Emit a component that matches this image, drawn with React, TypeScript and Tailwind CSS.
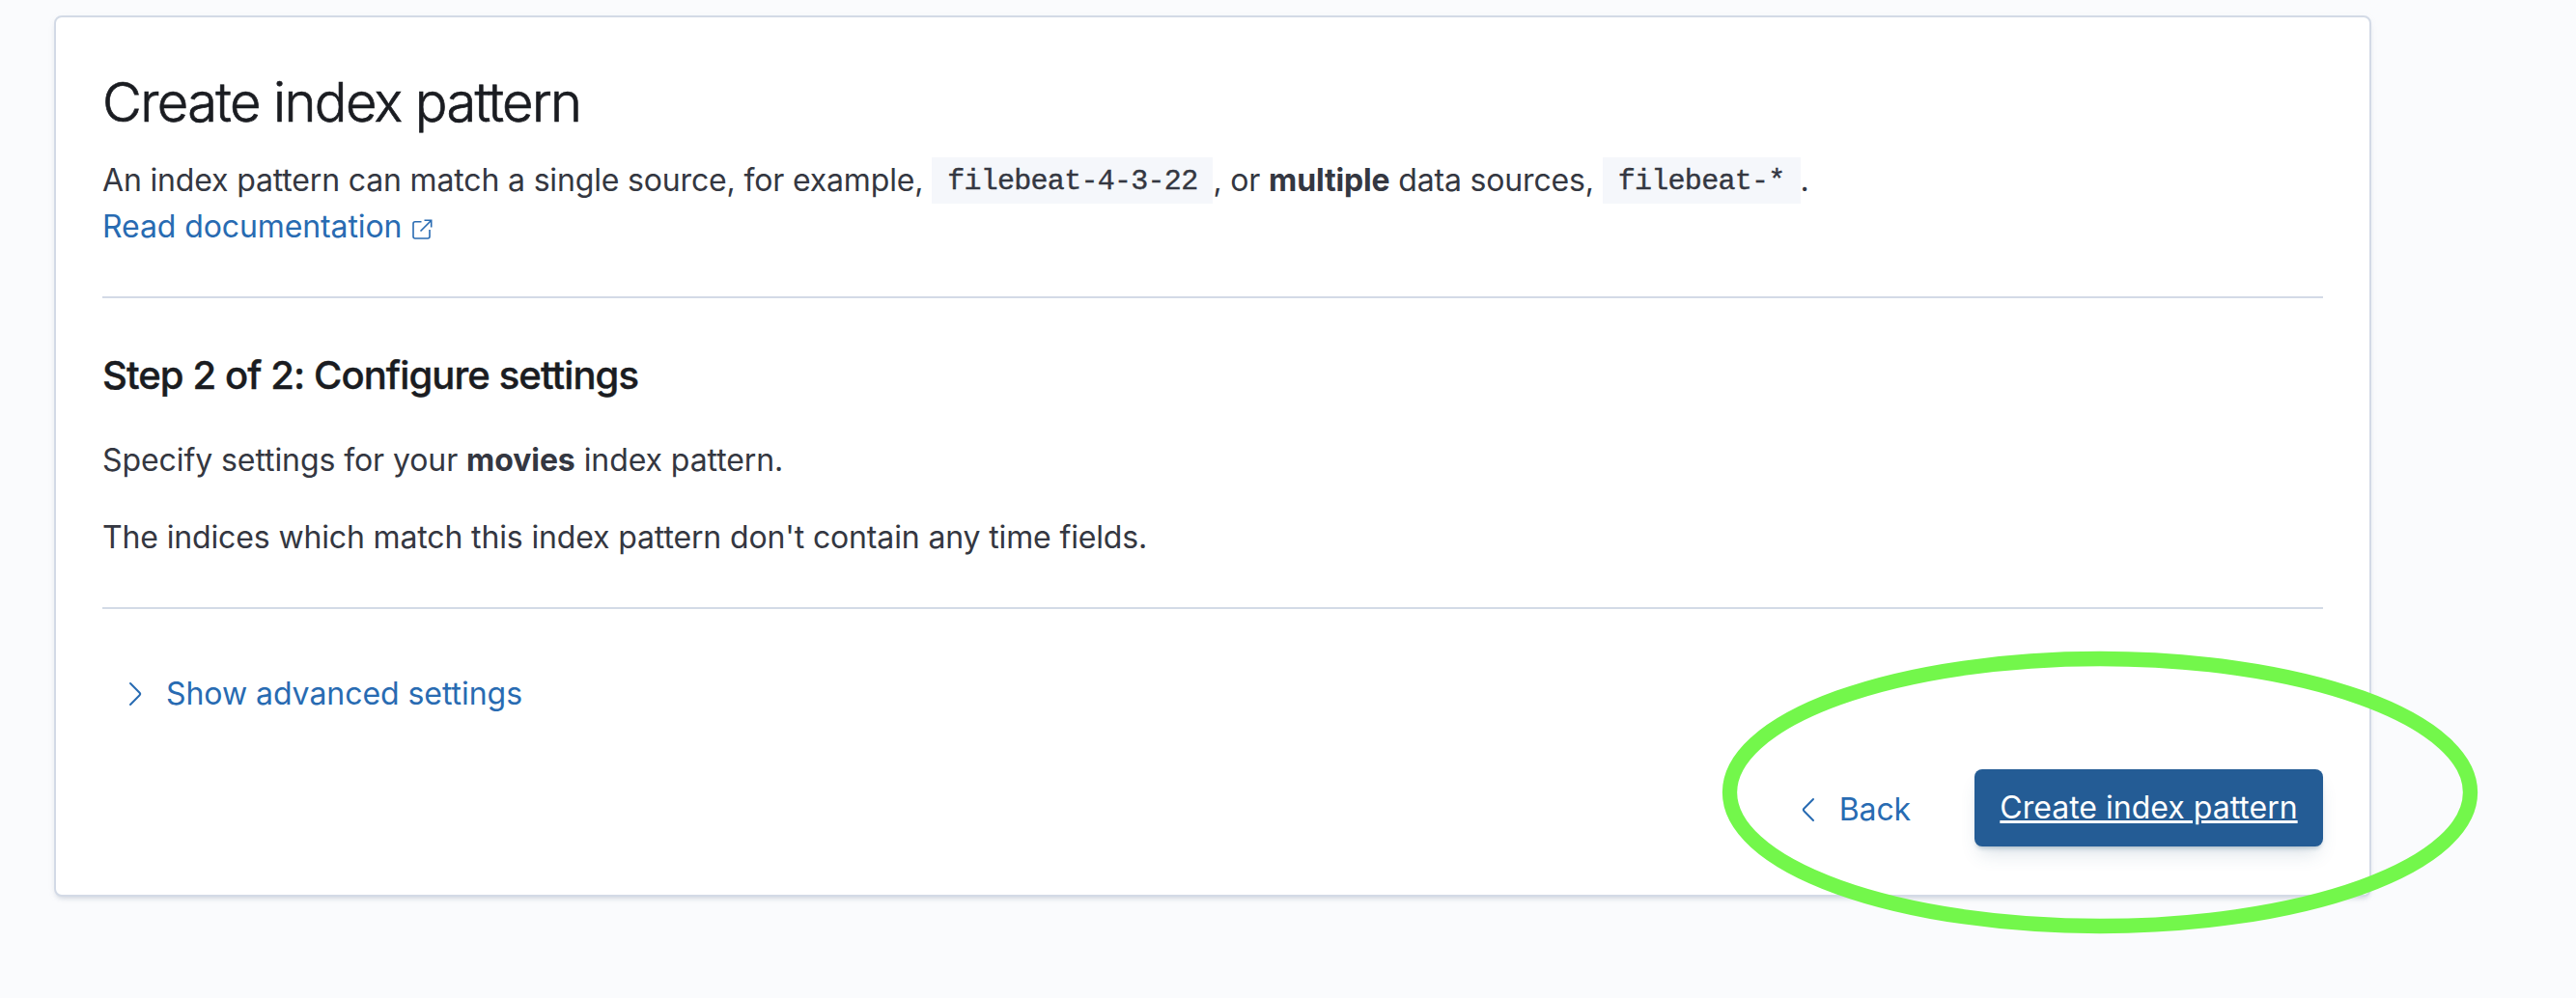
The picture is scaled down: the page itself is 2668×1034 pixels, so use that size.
import React from "react";

function Code({ children }: { children: React.ReactNode }) {
  return (
    <code className="inline-block h-12 bg-[#f5f7fb] px-4 align-top font-['Liberation_Mono',monospace] text-[30px] leading-[50px] tracking-[-0.72px] text-[#343741] [-webkit-text-stroke:0.4px_#343741]">
      {children}
    </code>
  );
}

function PopoutIcon() {
  return (
    <svg className="ml-[9px] inline-block h-6 w-6 align-[-3px]" viewBox="0 0 24 24" fill="none" stroke="currentColor" strokeWidth="1.6">
      <path d="M11.500 4.800H5a2 2 0 0 0-2 2V20a2 2 0 0 0 2 2h13a2 2 0 0 0 2-2v-7" />
      <path d="M14.500 3.300h7.200v7.200M21.500 3.500 10.500 14.500" />
    </svg>
  );
}

function Chevron({ left = false }: { left?: boolean }) {
  return (
    <svg className="h-[26px] w-4 shrink-0" viewBox="0 0 16 26" fill="none" stroke="currentColor" strokeWidth="2" strokeLinecap="round" strokeLinejoin="round">
      <path d={left ? "M13 2 3.400 11.800a1.700 1.700 0 0 0 0 2.400L13 24" : "M3 2l9.600 9.800a1.700 1.700 0 0 1 0 2.400L3 24"} />
    </svg>
  );
}

export default function App() {
  return (
    <div className="relative h-[1034px] w-[2668px] overflow-hidden bg-[#fafbfd] pl-14 pt-4 font-['Inter',sans-serif] text-[32px] leading-[48px] tracking-[-0.14px] text-[#343741]">
      <main className="flex h-[913px] w-[2400px] flex-col rounded-lg border-2 border-[#d3dae6] bg-white px-12 shadow-[0_4px_4px_-2px_rgba(152,162,179,0.3),0_2px_10px_-4px_rgba(152,162,179,0.3)]">
        <h1 className="mt-[53px] text-[56px] font-light leading-[70px] tracking-[-1.6px] text-[#1a1c21] [-webkit-text-stroke:0.7px_#1a1c21]">Create index pattern</h1>
        <p className="mt-[22px] whitespace-nowrap tracking-[-0.16px]">
          An index pattern can match a single source, for example, <Code>filebeat-4-3-22</Code>, or{" "}
          <strong className="font-bold">multiple</strong> data sources, <Code>filebeat-*</Code>.
          <br />
          <a className="tracking-[-0.1px] text-[#286bb2]">
            Read documentation
            <PopoutIcon />
          </a>
        </p>
        <hr className="mt-12 border-t-2 border-[#d3dae6]" />
        <h2 className="mt-[55px] text-[40px] font-medium leading-[50px] tracking-[-0.9px] text-[#1a1c21] [-webkit-text-stroke:0.4px_#1a1c21]">Step 2 of 2: Configure settings</h2>
        <p className="mt-[39px] tracking-[-0.08px]">
          Specify settings for your <strong className="font-bold">movies</strong> index pattern.
        </p>
        <p className="mt-8">The indices which match this index pattern don't contain any time fields.</p>
        <hr className="mt-12 border-t-2 border-[#d3dae6]" />
        <button className="mt-16 flex items-center gap-6 self-start pl-[26px] tracking-[-0.05px] text-[#286bb2]">
          <Chevron />
          <span>Show advanced settings</span>
        </button>
        <div className="mt-[54px] flex items-center justify-end">
          <button className="mr-[66px] mt-1 flex items-center gap-6 text-[#286bb2]">
            <Chevron left />
            <span>Back</span>
          </button>
          <button className="h-20 w-[361px] rounded-lg bg-[#245c95] tracking-[0.01px] text-white underline decoration-[3px] underline-offset-2 shadow-[0_4px_4px_-2px_rgba(54,97,126,0.3),0_12px_20px_-6px_rgba(54,97,126,0.2)]">
            Create index pattern
          </button>
        </div>
      </main>
      <svg className="pointer-events-none absolute left-[1775px] top-[665px] h-[312px] w-[800px]" viewBox="0 0 800 312" fill="none">
        <ellipse cx="400" cy="156" rx="383.500" ry="138.500" stroke="#73f74b" strokeWidth="15.300" />
      </svg>
    </div>
  );
}
